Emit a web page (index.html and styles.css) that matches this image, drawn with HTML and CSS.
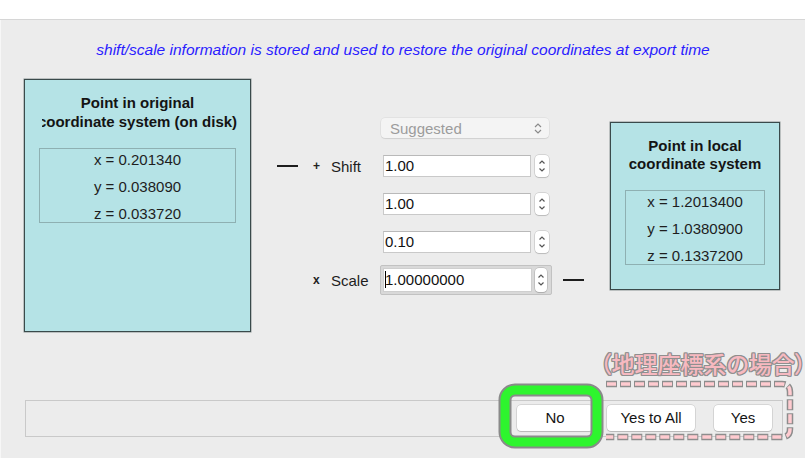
FILE: index.html
```html
<!DOCTYPE html>
<html lang="en">
<head>
<meta charset="utf-8">
<title>Global shift/scale</title>
<link rel="stylesheet" href="styles.css">
</head>
<body>
<div class="top"></div>
<div class="panel">
  <p class="info">shift/scale information is stored and used to restore the original coordinates at export time</p>
  <div class="content">
    <div class="point point-orig">
      <div class="ptitle">
        <div>Point in original</div>
        <div class="clip">coordinate system (on disk)</div>
      </div>
      <div class="coords">
        <div>x = 0.201340</div>
        <div>y = 0.038090</div>
        <div>z = 0.033720</div>
      </div>
    </div>

    <div class="ops">
      <div class="combo">
        <span>Suggested</span>
        <svg class="updown" width="8" height="13" viewBox="0 0 8 13"><path d="M1 5 L4 2 L7 5 M1 8 L4 11 L7 8" fill="none" stroke="#8a8a8a" stroke-width="1.2"/></svg>
      </div>

      <div class="dash r2"></div>
      <div class="sign r2">+</div>
      <div class="label r2">Shift</div>
      <div class="field r2">1.00</div>
      <div class="stepper r2"><svg width="14" height="22" viewBox="0 0 14 22"><path d="M4.5 8.5 L7 6 L9.5 8.5 M4.5 13.5 L7 16 L9.5 13.5" fill="none" stroke="#555" stroke-width="1.2"/></svg></div>

      <div class="field r3">1.00</div>
      <div class="stepper r3"><svg width="14" height="22" viewBox="0 0 14 22"><path d="M4.5 8.5 L7 6 L9.5 8.5 M4.5 13.5 L7 16 L9.5 13.5" fill="none" stroke="#555" stroke-width="1.2"/></svg></div>

      <div class="field r4">0.10</div>
      <div class="stepper r4"><svg width="14" height="22" viewBox="0 0 14 22"><path d="M4.5 8.5 L7 6 L9.5 8.5 M4.5 13.5 L7 16 L9.5 13.5" fill="none" stroke="#555" stroke-width="1.2"/></svg></div>

      <div class="sign r5">x</div>
      <div class="label r5">Scale</div>
      <div class="focus r5">
        <div class="field infocus"><span class="caret"></span>1.00000000</div>
        <div class="stepper"><svg width="12" height="24" viewBox="0 0 12 24"><path d="M3.5 9.5 L6 7 L8.5 9.5 M3.5 14.5 L6 17 L8.5 14.5" fill="none" stroke="#555" stroke-width="1.2"/></svg></div>
      </div>
      <div class="dash dash-out r5"></div>
    </div>

    <div class="point point-local">
      <div class="ptitle">
        <div>Point in local</div>
        <div>coordinate system</div>
      </div>
      <div class="coords">
        <div>x = 1.2013400</div>
        <div>y = 1.0380900</div>
        <div>z = 0.1337200</div>
      </div>
    </div>
  </div>

  <div class="bar">
    <button class="btn btn-no">No</button>
    <button class="btn btn-all">Yes to All</button>
    <button class="btn btn-yes">Yes</button>
  </div>
</div>

<svg class="marks" width="805" height="459" viewBox="0 0 805 459">
  <path d="M606 384 H782 Q790 384 790 392 V429 Q790 437 782 437 H606" fill="none" stroke="#8d8d8d" stroke-width="6.5" stroke-dasharray="11 3"/>
  <path d="M606 384 H782 Q790 384 790 392 V429 Q790 437 782 437 H606" fill="none" stroke="#ffcbd0" stroke-width="3.5" stroke-dasharray="9 5" stroke-dashoffset="-1"/>
  <rect x="505" y="390" width="92" height="52" rx="10" fill="none" stroke="#8a8a8a" stroke-width="13"/>
  <rect x="505" y="390" width="92" height="52" rx="10" fill="none" stroke="#2ef52e" stroke-width="9"/>
</svg>
<div class="note">（地理座標系の場合）</div>
</body>
</html>
```

FILE: styles.css
```css
html, body {
  margin: 0;
  padding: 0;
  background: #ffffff;
  font-family: "Liberation Sans", Arial, sans-serif;
  color: #1a1a1a;
}

body {
  position: relative;
  width: 805px;
  height: 459px;
  overflow: hidden;
}

.top {
  height: 19px;
  border-bottom: 1px solid #d6d6d6;
  background: #ffffff;
}

.panel {
  background: #ececec;
  border-left: 1px solid #f7f7f7;
  padding-bottom: 21px;
}

.info {
  margin: 0;
  padding-top: 21px;
  line-height: 18px;
  font-size: 15.5px;
  font-style: italic;
  color: #2a1cff;
  text-align: center;
}

.content {
  margin-top: 20px;
  height: 253px;
  display: flex;
  align-items: center;
  padding-left: 23px;
}

.point {
  box-sizing: border-box;
  background: #b5e3e6;
  border: 1px solid #3a4a4b;
  box-shadow: 0 0 0 0.5px rgba(40, 60, 60, 0.5);
}

.point-orig {
  width: 227px;
  height: 253px;
  padding-top: 13px;
}

.point-local {
  width: 170px;
  height: 168px;
  padding-top: 14px;
  margin-left: 26px;
}

.ptitle {
  text-align: center;
  font-weight: bold;
  font-size: 15px;
  line-height: 19px;
  color: #141414;
  white-space: nowrap;
}

.point-local .ptitle {
  line-height: 18px;
}

.clip {
  clip-path: inset(0 12px 0 17px);
}

.coords {
  margin: 17px 14px 0;
  height: 75px;
  box-sizing: border-box;
  border: 1px solid #8eb0b2;
  text-align: center;
  font-size: 15px;
  line-height: 27px;
  color: #1e1e1e;
}

.coords div:first-child {
  margin-top: -3px;
}

.ops {
  margin-left: 26px;
  margin-bottom: 3px;
  display: grid;
  grid-template-columns: 21px 33px 52px 148px 22px 10px 21px;
  grid-template-rows: repeat(5, 38px);
  align-items: center;
}

.r2 { grid-row: 2; }
.r3 { grid-row: 3; }
.r4 { grid-row: 4; }
.r5 { grid-row: 5; }

.combo {
  grid-row: 1;
  grid-column: 4 / span 2;
  margin-left: -2px;
  width: 168px;
  height: 20px;
  box-sizing: border-box;
  background: #f4f4f4;
  border-radius: 4px;
  box-shadow: 0 0 0 0.5px rgba(0, 0, 0, 0.08), 0 1px 1px rgba(0, 0, 0, 0.08);
  display: flex;
  align-items: center;
  justify-content: space-between;
  padding: 0 7px 0 9px;
  font-size: 15px;
  color: #9c9c9c;
}

.dash {
  grid-column: 1;
  height: 1.5px;
  background: #1d1d1d;
}

.dash-out {
  grid-column: 7;
}

.sign {
  grid-column: 2;
  padding-left: 15px;
  font-size: 12px;
  font-weight: bold;
  color: #222;
}

.label {
  grid-column: 3;
  font-size: 15px;
  color: #1d1d1d;
}

.field {
  grid-column: 4;
  height: 22px;
  box-sizing: border-box;
  background: #ffffff;
  border: 1px solid #c9c9c9;
  border-top-color: #b9b9b9;
  padding-left: 1px;
  font-size: 15px;
  line-height: 20px;
  color: #111;
}

.stepper {
  grid-column: 5;
  margin-left: 4px;
  width: 14px;
  height: 22px;
  box-sizing: border-box;
  background: #ffffff;
  border-radius: 4px;
  box-shadow: 0 0 0 0.5px rgba(0, 0, 0, 0.2), 0 1px 1px rgba(0, 0, 0, 0.12);
}

.stepper svg {
  display: block;
}

.focus {
  grid-column: 4 / span 2;
  margin-left: -3px;
  width: 172px;
  height: 30px;
  box-sizing: border-box;
  background: #d9d9d9;
  border: 1px solid #c2c2c2;
  border-radius: 2px;
  padding: 2px;
  display: flex;
  align-items: center;
  gap: 3px;
}

.focus .field {
  width: 149px;
  height: 24px;
  line-height: 22px;
  border-color: #cfcfcf;
}

.focus .stepper {
  margin-left: 0;
  width: 12px;
  height: 24px;
}

.caret {
  display: inline-block;
  width: 1px;
  height: 17px;
  background: #000;
  vertical-align: -3px;
  margin-right: -1px;
}

.bar {
  margin: 68px 22px 0 24px;
  height: 37px;
  box-sizing: border-box;
  border: 1px solid #c9c9c9;
  display: flex;
  justify-content: flex-end;
  align-items: center;
  padding-right: 10px;
}

.btn {
  height: 26px;
  border: none;
  border-radius: 4px;
  background: #ffffff;
  box-shadow: 0 0 0 0.5px rgba(0, 0, 0, 0.18), 0 1px 1px rgba(0, 0, 0, 0.14);
  font-family: "Liberation Sans", Arial, sans-serif;
  font-size: 15px;
  color: #141414;
  padding: 0;
  margin-top: -2px;
}

.btn-no { width: 76px; }
.btn-all { width: 88px; margin-left: 14px; }
.btn-yes { width: 58px; margin-left: 19px; }

.marks {
  position: absolute;
  left: 0;
  top: 0;
  pointer-events: none;
}

.note {
  position: absolute;
  left: 600px;
  top: 349px;
  font-family: "Noto Sans CJK JP", sans-serif;
  font-size: 23px;
  line-height: 28px;
  font-weight: 500;
  font-feature-settings: "palt";
  color: #f7b9c0;
  white-space: nowrap;
  text-shadow: 1px 0 0 #8f8f8f, -1px 0 0 #8f8f8f, 0 1px 0 #8f8f8f, 0 -1px 0 #8f8f8f,
    1px 1px 0 #8f8f8f, -1px -1px 0 #8f8f8f, 1px -1px 0 #8f8f8f, -1px 1px 0 #8f8f8f;
}
```
